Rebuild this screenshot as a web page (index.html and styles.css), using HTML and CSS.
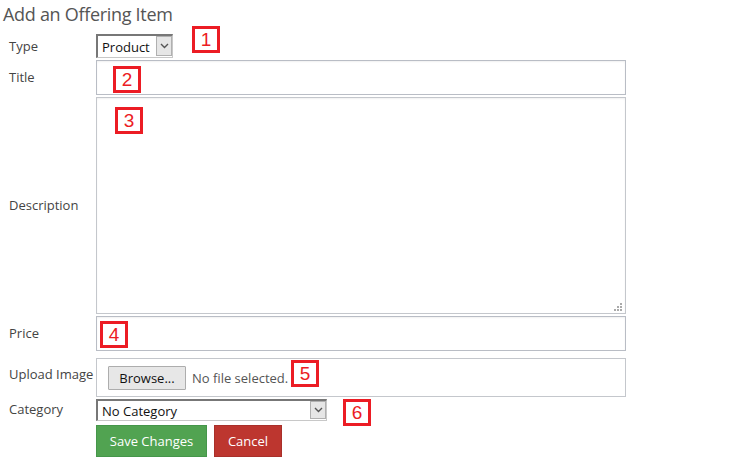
FILE: index.html
```html
<!DOCTYPE html>
<html lang="en">
<head>
    <meta charset="UTF-8">
    <title>Add an Offering Item</title>
    <link rel="stylesheet" href="styles.css">
</head>
<body>
    <div class="page">
        <h1>Add an Offering Item</h1>

        <form class="offer-form">
            <label class="lbl" for="type">Type</label>
            <div class="field">
                <span class="select small">
                    <select id="type"><option>Product</option><option>Service</option></select>
                    <span class="arrow"><svg width="9" height="6" viewBox="0 0 9 6"><path d="M1 1 L4.5 4.5 L8 1" fill="none" stroke="#555" stroke-width="1.4"/></svg></span>
                </span>
                <span class="mark mark-1">1</span>
            </div>

            <label class="lbl" for="title">Title</label>
            <div class="field">
                <input type="text" id="title" class="text">
                <span class="mark mark-2">2</span>
            </div>

            <label class="lbl" for="desc">Description</label>
            <div class="field">
                <textarea id="desc" class="text area"></textarea>
                <span class="grip">
                    <svg width="8" height="8" viewBox="0 0 8 8" fill="#aaa">
                        <rect x="6" y="0" width="2" height="2"/>
                        <rect x="3" y="3" width="2" height="2"/><rect x="6" y="3" width="2" height="2"/>
                        <rect x="0" y="6" width="2" height="2"/><rect x="3" y="6" width="2" height="2"/><rect x="6" y="6" width="2" height="2"/>
                    </svg>
                </span>
                <span class="mark mark-3">3</span>
            </div>

            <label class="lbl" for="price">Price</label>
            <div class="field">
                <input type="text" id="price" class="text">
                <span class="mark mark-4">4</span>
            </div>

            <label class="lbl upload-lbl">Upload Image</label>
            <div class="field">
                <div class="file-box">
                    <button type="button" class="browse">Browse...</button>
                    <span class="file-name">No file selected.</span>
                </div>
                <span class="mark mark-5">5</span>
            </div>

            <label class="lbl" for="cat">Category</label>
            <div class="field">
                <span class="select wide">
                    <select id="cat"><option>No Category</option></select>
                    <span class="arrow"><svg width="9" height="6" viewBox="0 0 9 6"><path d="M1 1 L4.5 4.5 L8 1" fill="none" stroke="#555" stroke-width="1.4"/></svg></span>
                </span>
                <span class="mark mark-6">6</span>
            </div>

            <div></div>
            <div class="actions">
                <button type="button" class="btn save">Save Changes</button>
                <button type="button" class="btn cancel">Cancel</button>
            </div>
        </form>
    </div>
</body>
</html>
```

FILE: styles.css
```css
body {
    margin: 0;
    font-family: "Open Sans", Arial, sans-serif;
    font-size: 13px;
    color: #333;
    background: #fff;
}
.page {
    padding: 2px 0 0 3px;
}
h1 {
    margin: 0 0 8px 0;
    font-size: 18px;
    font-weight: normal;
    color: #555;
    line-height: 24px;
    letter-spacing: -0.3px;
}
.offer-form {
    display: grid;
    grid-template-columns: 93px 530px;
    align-items: center;
}
.lbl {
    padding-left: 6px;
    color: #444;
}
.field {
    position: relative;
    display: flex;
    align-items: center;
}
.select {
    position: relative;
    display: block;
    line-height: 0;
}
.select select {
    -webkit-appearance: none;
    appearance: none;
    font-family: "Open Sans", Arial, sans-serif;
    font-size: 13px;
    color: #111;
    background: #fff;
    border: 1px solid #c8c8c8;
    border-top: 2px solid #777;
    border-left: 2px solid #777;
    padding: 0 0 0 4px;
    margin: 0;
    border-radius: 0;
    outline: none;
}
.select.small select {
    width: 77px;
    height: 24px;
}
.select.wide select {
    width: 231px;
    height: 22px;
}
.select .arrow {
    position: absolute;
    right: 1px;
    top: 2px;
    width: 14px;
    bottom: 2px;
    background: #e6e6e6;
    border: 1px solid #b0b0b0;
    display: flex;
    align-items: center;
    justify-content: center;
    pointer-events: none;
}
.text {
    box-sizing: border-box;
    width: 530px;
    height: 35px;
    margin: 0;
    border: 1px solid #b9bdc5;
    border-radius: 0;
    box-shadow: inset 0 1px 2px rgba(0,0,0,0.06);
    font-family: "Open Sans", Arial, sans-serif;
    font-size: 13px;
}
#title { margin-top: 2px; }
.area {
    height: 217px;
    margin-top: 2px;
    resize: none;
    border-color: #c4c7cc;
    display: block;
}
.grip {
    position: absolute;
    right: 4px;
    bottom: 3px;
    line-height: 0;
}
#price { margin-top: 2px; }
.file-box {
    box-sizing: border-box;
    width: 530px;
    height: 39px;
    margin-top: 7px;
    border: 1px solid #c4c7cc;
    display: flex;
    align-items: center;
    padding-left: 11px;
    gap: 6px;
}
.browse {
    font-family: "Open Sans", Arial, sans-serif;
    font-size: 13px;
    color: #111;
    background: #e7e7e7;
    border: 1px solid #adadad;
    border-radius: 1px;
    height: 24px;
    width: 78px;
    padding: 0;
}
.file-name {
    color: #555;
}
.select.wide {
    margin-top: 2px;
}
.actions {
    display: flex;
    gap: 7px;
    margin-top: 4px;
}
.btn {
    font-family: "Open Sans", Arial, sans-serif;
    font-size: 13px;
    color: #fff;
    height: 32px;
    padding: 0;
    border-radius: 0;
    cursor: pointer;
}
.save {
    width: 111px;
    background: #51a351;
    border: 1px solid #45964a;
}
.cancel {
    width: 68px;
    background: #bd362f;
    border: 1px solid #a9302a;
}
.mark {
    position: absolute;
    box-sizing: border-box;
    width: 28px;
    height: 27px;
    border: 3px solid #ec1c24;
    color: #ec1c24;
    font-family: "Liberation Sans", Arial, sans-serif;
    font-size: 19px;
    line-height: 21px;
    text-align: center;
    background: #fff;
}
.mark-1 { left: 96px; top: -8px; }
.mark-2 { left: 17px; top: 8px; }
.mark-3 { left: 19px; top: 12px; }
.mark-4 { left: 4px; top: 7px; }
.mark-5 { left: 195px; top: 9px; }
.mark-6 { left: 247px; top: 2px; }
```
